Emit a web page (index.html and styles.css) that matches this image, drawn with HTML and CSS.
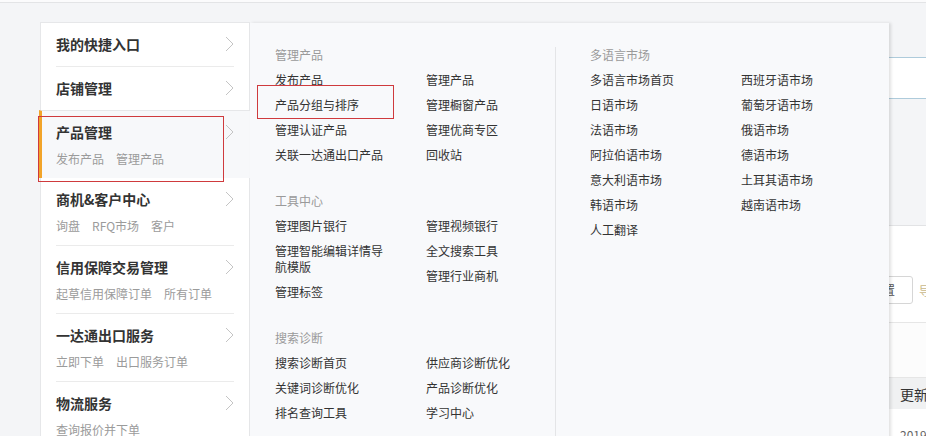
FILE: index.html
```html
<!DOCTYPE html>
<html lang="zh-CN">
<head>
<meta charset="utf-8">
<title>产品管理</title>
<link rel="stylesheet" href="styles.css">
</head>
<body>
<div class="topbar"></div>
<div class="layout">
  <aside class="sidebar">
    <div class="menu-item">
      <div class="menu-inner sep">
        <div class="menu-title">我的快捷入口<svg class="chev" width="9" height="16" viewBox="0 0 9 16"><polyline points="1,1 8,8 1,15"/></svg></div>
      </div>
    </div>
    <div class="menu-item">
      <div class="menu-inner">
        <div class="menu-title">店铺管理<svg class="chev" width="9" height="16" viewBox="0 0 9 16"><polyline points="1,1 8,8 1,15"/></svg></div>
      </div>
    </div>
    <div class="menu-item active">
      <div class="menu-inner">
        <div class="menu-title">产品管理<svg class="chev" width="9" height="16" viewBox="0 0 9 16"><polyline points="1,1 8,8 1,15"/></svg></div>
        <div class="menu-sub"><span>发布产品</span><span>管理产品</span></div>
      </div>
    </div>
    <div class="menu-item">
      <div class="menu-inner sep">
        <div class="menu-title">商机&amp;客户中心<svg class="chev" width="9" height="16" viewBox="0 0 9 16"><polyline points="1,1 8,8 1,15"/></svg></div>
        <div class="menu-sub"><span>询盘</span><span>RFQ市场</span><span>客户</span></div>
      </div>
    </div>
    <div class="menu-item">
      <div class="menu-inner sep">
        <div class="menu-title">信用保障交易管理<svg class="chev" width="9" height="16" viewBox="0 0 9 16"><polyline points="1,1 8,8 1,15"/></svg></div>
        <div class="menu-sub"><span>起草信用保障订单</span><span>所有订单</span></div>
      </div>
    </div>
    <div class="menu-item">
      <div class="menu-inner sep">
        <div class="menu-title">一达通出口服务<svg class="chev" width="9" height="16" viewBox="0 0 9 16"><polyline points="1,1 8,8 1,15"/></svg></div>
        <div class="menu-sub"><span>立即下单</span><span>出口服务订单</span></div>
      </div>
    </div>
    <div class="menu-item">
      <div class="menu-inner sep">
        <div class="menu-title">物流服务<svg class="chev" width="9" height="16" viewBox="0 0 9 16"><polyline points="1,1 8,8 1,15"/></svg></div>
        <div class="menu-sub"><span>查询报价并下单</span></div>
      </div>
    </div>
  </aside>

  <main class="main">
    <div class="search-box"></div>
    <section class="card">
      <div class="btn-row"><span class="btn">重置</span><span class="btn-link">导出</span></div>
      <div class="card-gap"></div>
      <div class="table-head"><span></span><span class="th">更新时间</span></div>
      <div class="table-row"><span></span><span class="td">2019-03-01</span></div>
    </section>
  </main>
</div>

<div class="dropdown">
  <div class="group group-left">
    <div class="section">
      <div class="sec-title">管理产品</div>
      <div class="cols">
        <div class="col">
          <a>发布产品</a>
          <a>产品分组与排序</a>
          <a>管理认证产品</a>
          <a>关联一达通出口产品</a>
        </div>
        <div class="col">
          <a>管理产品</a>
          <a>管理橱窗产品</a>
          <a>管理优商专区</a>
          <a>回收站</a>
        </div>
      </div>
    </div>
    <div class="section">
      <div class="sec-title">工具中心</div>
      <div class="cols">
        <div class="col">
          <a>管理图片银行</a>
          <a>管理智能编辑详情导航模版</a>
          <a>管理标签</a>
        </div>
        <div class="col">
          <a>管理视频银行</a>
          <a>全文搜索工具</a>
          <a>管理行业商机</a>
        </div>
      </div>
    </div>
    <div class="section">
      <div class="sec-title">搜索诊断</div>
      <div class="cols">
        <div class="col">
          <a>搜索诊断首页</a>
          <a>关键词诊断优化</a>
          <a>排名查询工具</a>
        </div>
        <div class="col">
          <a>供应商诊断优化</a>
          <a>产品诊断优化</a>
          <a>学习中心</a>
        </div>
      </div>
    </div>
  </div>
  <div class="group group-right">
    <div class="section">
      <div class="sec-title">多语言市场</div>
      <div class="cols">
        <div class="col">
          <a>多语言市场首页</a>
          <a>日语市场</a>
          <a>法语市场</a>
          <a>阿拉伯语市场</a>
          <a>意大利语市场</a>
          <a>韩语市场</a>
          <a>人工翻译</a>
        </div>
        <div class="col">
          <a>西班牙语市场</a>
          <a>葡萄牙语市场</a>
          <a>俄语市场</a>
          <a>德语市场</a>
          <a>土耳其语市场</a>
          <a>越南语市场</a>
        </div>
      </div>
    </div>
  </div>
</div>

<div class="mark mark-menu"></div>
<div class="mark mark-link"></div>
</body>
</html>
```

FILE: styles.css
```css
* { box-sizing: border-box; }
html, body {
  margin: 0;
  padding: 0;
}
body {
  width: 926px;
  height: 436px;
  overflow: hidden;
  position: relative;
  background: #f4f5f7;
  font-family: "Noto Sans CJK SC", "Liberation Sans", sans-serif;
  color: #333;
}
.topbar {
  height: 3px;
  background: #fbfbfc;
  border-bottom: 1px solid #e3e4e6;
}
.layout {
  display: flex;
  align-items: flex-start;
}

/* sidebar */
.sidebar {
  margin-left: 40px;
  margin-top: 19px;
  width: 210px;
  flex: none;
  background: #fff;
  border: 1px solid #e6e7e9;
  border-bottom: none;
}
.menu-item {
  padding: 0 15px;
}
.menu-inner {
  padding: 11px 0 9px;
}
.menu-inner.sep {
  border-bottom: 1px solid #ebebeb;
}
.menu-item:nth-child(1) .menu-inner { padding: 11px 0 12px; }
.menu-item:nth-child(2) .menu-inner { padding: 11px 0 12px; }
.menu-title {
  display: flex;
  align-items: center;
  justify-content: space-between;
  font-size: 14px;
  line-height: 20px;
  font-weight: 700;
  color: #333;
}
.chev {
  display: block;
  margin-top: -1px;
}
.chev polyline {
  fill: none;
  stroke: #c4c4c4;
  stroke-width: 1;
}
.menu-sub {
  display: flex;
  gap: 12px;
  margin-top: 7px;
  font-size: 12px;
  line-height: 20px;
  color: #9b9b9b;
}
.menu-item.active {
  background: #f7f8fa;
  border-top: 1px solid #e6e7e9;
  border-left: 3px solid #f2a429;
  margin-left: -2px;
  margin-right: -1px;
  padding-left: 14px;
  padding-right: 16px;
}
.menu-item.active .menu-inner {
  padding: 11px 0 9px;
}

/* main background content */
.main {
  width: 890px;
  flex: none;
  padding-top: 54px;
}
.search-box {
  height: 42px;
  background: #fff;
  border-top: 1px solid #aecbdb;
  border-bottom: 1px solid #aecbdb;
}
.card {
  margin-top: 126px;
  background: #fff;
  border-top: 1px solid #e2e3e5;
  height: 220px;
}
.btn-row {
  display: flex;
  align-items: center;
  padding-left: 603px;
  padding-top: 50px;
  padding-bottom: 18px;
  border-bottom: 1px solid #e6e6e6;
}
.btn {
  width: 60px;
  height: 28px;
  border: 1px solid #d6d6d6;
  border-radius: 3px;
  font-size: 12px;
  line-height: 26px;
  text-align: center;
  color: #555;
}
.btn-link {
  margin-left: 6px;
  font-size: 12px;
  color: #c9b98a;
}
.card-gap {
  height: 54px;
  background: #fcfcfc;
}
.table-head {
  display: grid;
  grid-template-columns: 650px 1fr;
  height: 32px;
  background: #f0f1f2;
  border-top: 1px solid #e6e6e6;
  align-items: center;
}
.th {
  font-size: 14px;
  color: #333;
}
.table-row {
  display: grid;
  grid-template-columns: 650px 1fr;
  padding-top: 17px;
}
.td {
  font-size: 12px;
  color: #666;
}

/* dropdown */
.dropdown {
  position: absolute;
  left: 250px;
  top: 23px;
  width: 639px;
  height: 420px;
  background: #f8f9fb;
  box-shadow: 2px 0 3px rgba(0, 0, 0, 0.12);
  display: flex;
  padding-top: 24px;
}
.group {
  display: flex;
  flex-direction: column;
  flex: none;
}
.group-left {
  width: 306px;
  padding-left: 25px;
  border-right: 1px solid #e4e5e7;
}
.group-right {
  padding-left: 34px;
}
.section {
  margin-bottom: 21px;
}
.sec-title {
  font-size: 12px;
  line-height: 16px;
  color: #9a9a9a;
  margin-bottom: 9px;
}
.cols {
  display: flex;
  align-items: flex-start;
}
.col {
  width: 151px;
  flex: none;
  display: flex;
  flex-direction: column;
  align-items: flex-start;
}
.col + .col {
  width: auto;
  flex: 1;
}
.col a {
  display: block;
  max-width: 112px;
  font-size: 12px;
  line-height: 16px;
  color: #333;
  margin-bottom: 9px;
  text-decoration: none;
}

/* annotation marks */
.mark {
  position: absolute;
  border: 1px solid #cf3a3d;
}
.mark-menu {
  left: 38px;
  top: 116px;
  width: 186px;
  height: 66px;
}
.mark-link {
  left: 257px;
  top: 85px;
  width: 137px;
  height: 34px;
}
```
